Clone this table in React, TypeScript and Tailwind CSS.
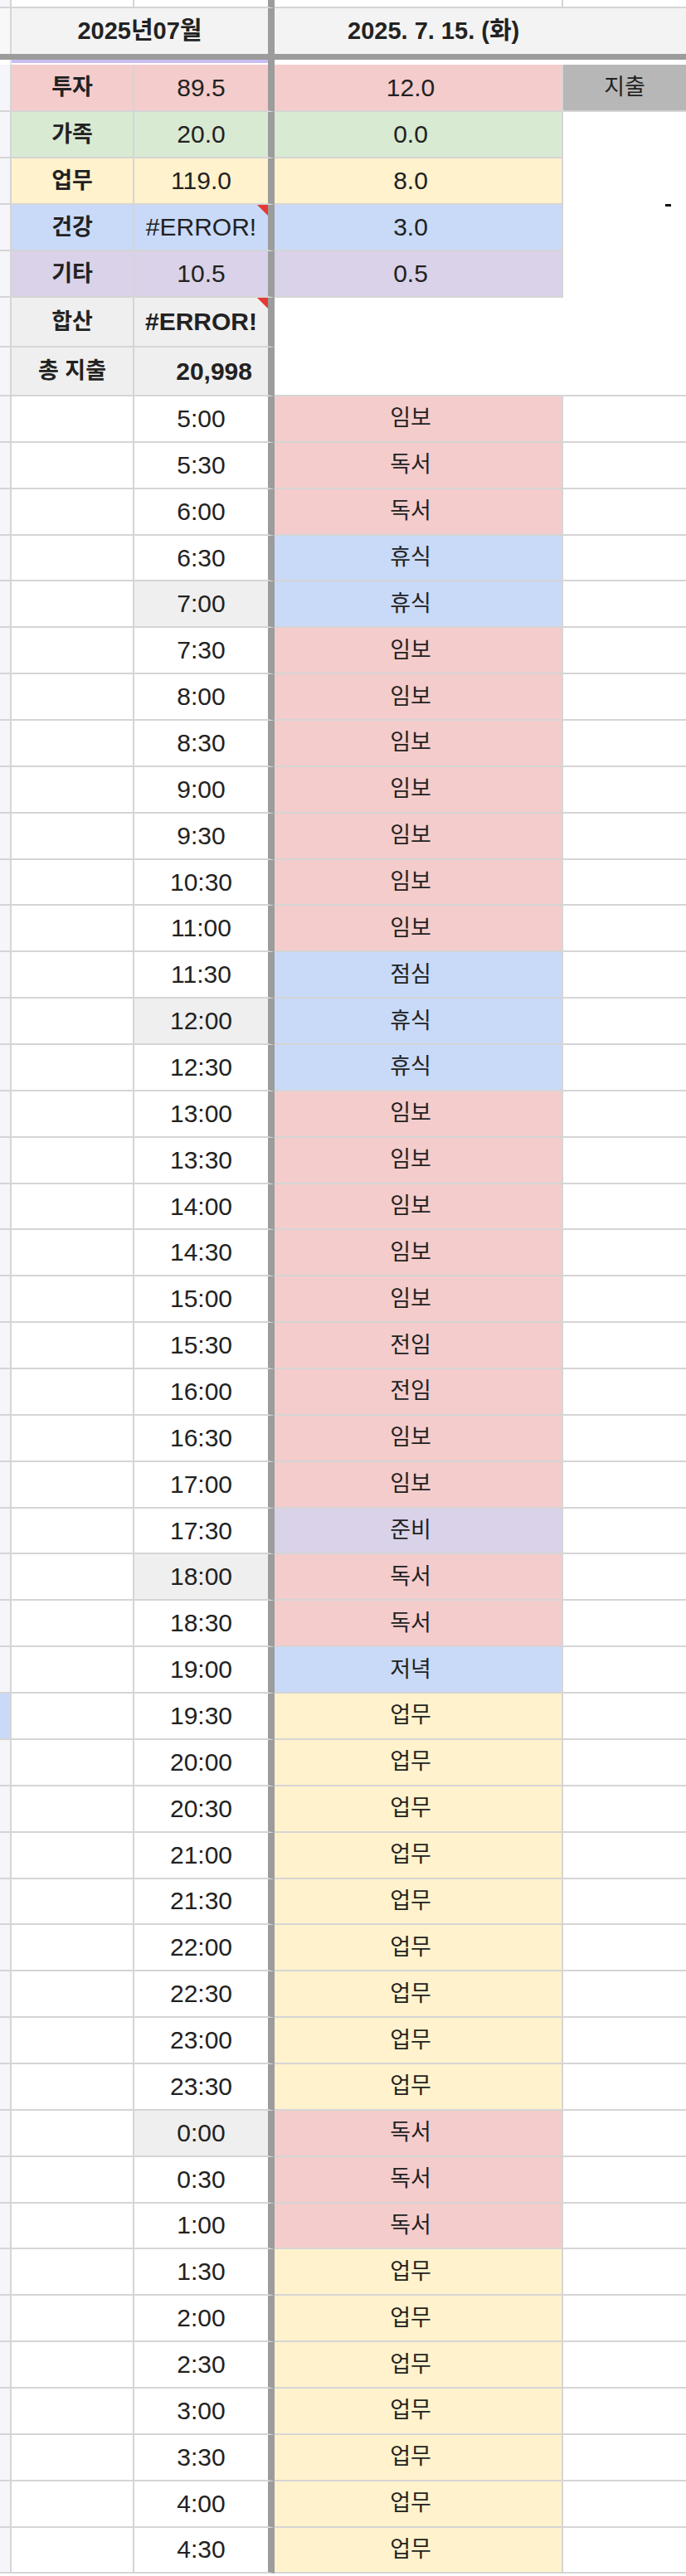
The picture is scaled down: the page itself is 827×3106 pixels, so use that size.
import React, { Fragment } from "react";

const fill: Record<string, string> = {
  red: "bg-[#f4cccc]",
  green: "bg-[#d9ead3]",
  yellow: "bg-[#fff2cc]",
  blue: "bg-[#c9daf8]",
  purple: "bg-[#d9d2e9]",
  gray: "bg-[#efefef]",
  white: "bg-white",
};

const summary = [
  { label: "투자", month: "89.5", day: "12.0", color: "red" },
  { label: "가족", month: "20.0", day: "0.0", color: "green" },
  { label: "업무", month: "119.0", day: "8.0", color: "yellow" },
  { label: "건강", month: "#ERROR!", day: "3.0", color: "blue", err: true },
  { label: "기타", month: "10.5", day: "0.5", color: "purple" },
  { label: "합산", month: "#ERROR!", color: "gray", err: true, bold: true },
  { label: "총 지출", month: "20,998", color: "gray", bold: true, right: true },
];

const schedule: [string, string, string][] = [
  ["5:00", "임보", "red"],
  ["5:30", "독서", "red"],
  ["6:00", "독서", "red"],
  ["6:30", "휴식", "blue"],
  ["7:00", "휴식", "blue"],
  ["7:30", "임보", "red"],
  ["8:00", "임보", "red"],
  ["8:30", "임보", "red"],
  ["9:00", "임보", "red"],
  ["9:30", "임보", "red"],
  ["10:30", "임보", "red"],
  ["11:00", "임보", "red"],
  ["11:30", "점심", "blue"],
  ["12:00", "휴식", "blue"],
  ["12:30", "휴식", "blue"],
  ["13:00", "임보", "red"],
  ["13:30", "임보", "red"],
  ["14:00", "임보", "red"],
  ["14:30", "임보", "red"],
  ["15:00", "임보", "red"],
  ["15:30", "전임", "red"],
  ["16:00", "전임", "red"],
  ["16:30", "임보", "red"],
  ["17:00", "임보", "red"],
  ["17:30", "준비", "purple"],
  ["18:00", "독서", "red"],
  ["18:30", "독서", "red"],
  ["19:00", "저녁", "blue"],
  ["19:30", "업무", "yellow"],
  ["20:00", "업무", "yellow"],
  ["20:30", "업무", "yellow"],
  ["21:00", "업무", "yellow"],
  ["21:30", "업무", "yellow"],
  ["22:00", "업무", "yellow"],
  ["22:30", "업무", "yellow"],
  ["23:00", "업무", "yellow"],
  ["23:30", "업무", "yellow"],
  ["0:00", "독서", "red"],
  ["0:30", "독서", "red"],
  ["1:00", "독서", "red"],
  ["1:30", "업무", "yellow"],
  ["2:00", "업무", "yellow"],
  ["2:30", "업무", "yellow"],
  ["3:00", "업무", "yellow"],
  ["3:30", "업무", "yellow"],
  ["4:00", "업무", "yellow"],
  ["4:30", "업무", "yellow"],
];

// shaded time cells
const grayTimes = ["7:00", "12:00", "18:00", "0:00"];

const line = "border-r-2 border-b-2 border-[#d5d5d5]";
const thick = "border-r-[8px] border-r-[#9c9c9c] border-b-2 border-b-[#d5d5d5]";
const cols = "grid grid-cols-[14px_148px_169px_348px_148px]";

function ErrorMark() {
  return (
    <svg className="absolute right-0 top-0 h-[13px] w-[13px]" viewBox="0 0 13 13">
      <polygon points="0,0 13,0 13,13" fill="#e53935" />
    </svg>
  );
}

export default function App() {
  return (
    <div className="w-[827px] overflow-hidden bg-white font-['Liberation_Sans','Noto_Sans_CJK_KR',sans-serif] text-[#222]">
      {/* row above header (cut off) */}
      <div className={`${cols} h-[10px]`}>
        <div className={`${line} bg-[#f5f5fa]`} />
        <div className={line} />
        <div className={thick} />
        <div className={line} />
        <div className="border-b-2 border-[#d5d5d5]" />
      </div>

      {/* header */}
      <div className={`${cols} h-[55px] bg-[#f3f3f3]`}>
        <div className="border-r-2 border-[#d5d5d5] bg-[#f8f8f8]" />
        <div className="col-span-2 flex items-center justify-center border-r-[8px] border-[#9c9c9c] text-[29px] font-bold leading-none">
          2025년07월
        </div>
        <div className="col-span-2 flex items-center pl-[88px] text-[29px] font-bold leading-none">
          2025. 7. 15. (화)
        </div>
      </div>

      {/* frozen divider */}
      <div className="h-[7px] bg-[#9c9c9c]" />
      <div className={`${cols} h-[6px]`}>
        <div className="border-r-2 border-[#e5e5e5]" />
        <div className="col-span-2 border-r-[8px] border-[#9c9c9c]">
          <div className="h-[4px] bg-[#cbbdf2]" />
        </div>
        <div className="col-span-2" />
      </div>

      {/* summary block */}
      <div className={`${cols} grid-rows-[57px_56px_56px_56px_56px_60px_59px]`}>
        {summary.map((r, i) => (
          <Fragment key={r.label}>
            <div className={`${line} bg-[#f5f5fa]`} />
            <div
              className={`${line} ${fill[r.color]} flex items-center justify-center text-[27px] font-bold leading-none`}
            >
              {r.label}
            </div>
            <div
              className={`${thick} ${fill[r.color]} relative flex items-center text-[30px] leading-none ${
                r.right ? "justify-end pr-[19px]" : "justify-center"
              } ${r.bold ? "font-bold" : ""}`}
            >
              {r.month}
              {r.err && <ErrorMark />}
            </div>
            {r.day !== undefined && (
              <div
                className={`${line} ${fill[r.color]} flex items-center justify-center pr-[18px] text-[30px] leading-none`}
              >
                {r.day}
              </div>
            )}
            {i === 0 && (
              <div className="flex items-center justify-center border-b-2 border-[#d5d5d5] bg-[#b7b7b7] text-[27px] leading-none">
                지출
              </div>
            )}
            {i === 1 && (
              <div className="row-span-4 bg-white pl-[123px] pt-[111px]">
                <div className="h-[3px] w-[7px] bg-[#111]" />
              </div>
            )}
            {i === 5 && <div className="col-span-2 row-span-2 border-b-2 border-[#d5d5d5] bg-white" />}
          </Fragment>
        ))}
      </div>

      {/* time schedule */}
      {schedule.map(([time, task, color]) => (
        <div key={time} className={`${cols} h-[55.86px]`}>
          <div className={`${line} ${time === "19:30" ? "bg-[#c9daf8]" : "bg-[#f5f5fa]"}`} />
          <div className={`${line} bg-white`} />
          <div
            className={`${thick} ${
              grayTimes.includes(time) ? "bg-[#efefef]" : "bg-white"
            } flex items-center justify-center text-[30px] leading-none`}
          >
            {time}
          </div>
          <div
            className={`${line} ${fill[color]} flex items-center justify-center pr-[18px] text-[27px] leading-none`}
          >
            {task}
          </div>
          <div className="border-b-2 border-[#d5d5d5] bg-white" />
        </div>
      ))}
    </div>
  );
}
